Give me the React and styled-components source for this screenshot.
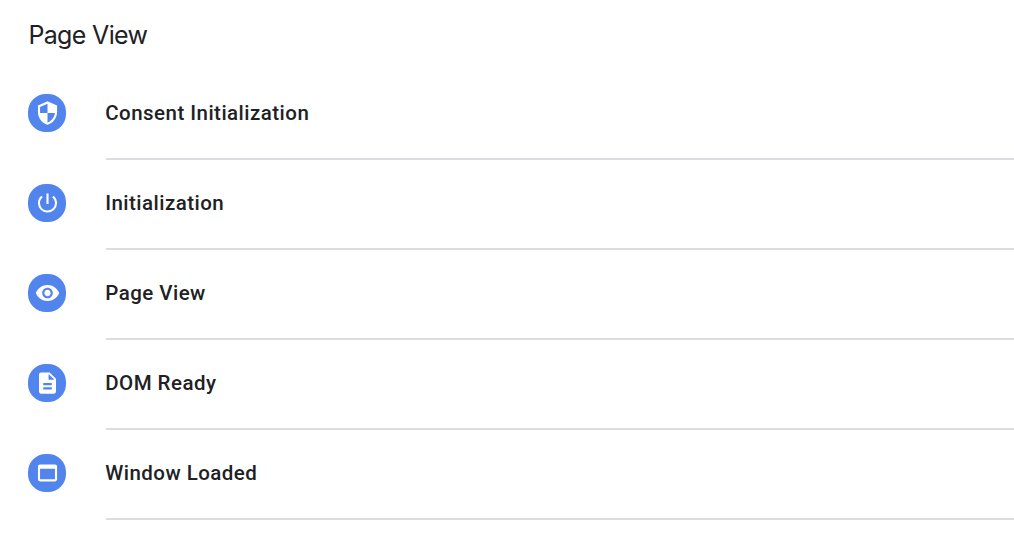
import React from 'react'
import styled, { createGlobalStyle } from 'styled-components'
import {
    MdSecurity,
    MdPowerSettingsNew,
    MdVisibility,
    MdDescription,
    MdWebAsset
} from 'react-icons/md'

const GlobalStyle = createGlobalStyle`
body {
    margin: 0;
    background: #fff;
}
`

const Panel = styled.div`
box-sizing: border-box;
height: 552px;
overflow: hidden;
padding-left: 28px;
color: #202124;
`

const Title = styled.h2`
margin: 0;
padding-top: 20px;
height: 50px;
font: 400 25px/30px Inter, sans-serif;
letter-spacing: -0.65px;
text-indent: 0.4px;
`

const List = styled.ul`
margin: 0;
padding: 0;
list-style: none;
`

const Row = styled.li`
display: flex;
height: 90px;
`

const Badge = styled.span`
box-sizing: border-box;
display: flex;
align-items: center;
justify-content: center;
flex: none;
width: 38px;
height: 38px;
margin: 24px 40px 0 0;
padding-left: 1px;
border-radius: 18px;
background: #5184ec;
color: #fff;

svg {
    width: 25px;
    height: 26px;
    transform: scale(1.02);
}
`

const Label = styled.div`
box-sizing: border-box;
flex: 1;
padding-top: 28px;
border-bottom: 2px solid #dadce0;
font: 500 20.5px/30px Roboto, sans-serif;
letter-spacing: 0.47px;
text-indent: -0.8px;
`

const triggers = [
    { name: 'Consent Initialization', icon: MdSecurity },
    { name: 'Initialization', icon: MdPowerSettingsNew },
    { name: 'Page View', icon: MdVisibility },
    { name: 'DOM Ready', icon: MdDescription },
    { name: 'Window Loaded', icon: MdWebAsset }
]

export default function App() {
    return (
        <Panel>
            <GlobalStyle />
            <Title>Page View</Title>
            <List>
                {triggers.map(({ name, icon: Icon }) => (
                    <Row key={name}>
                        <Badge><Icon /></Badge>
                        <Label>{name}</Label>
                    </Row>
                ))}
            </List>
        </Panel>
    )
}
